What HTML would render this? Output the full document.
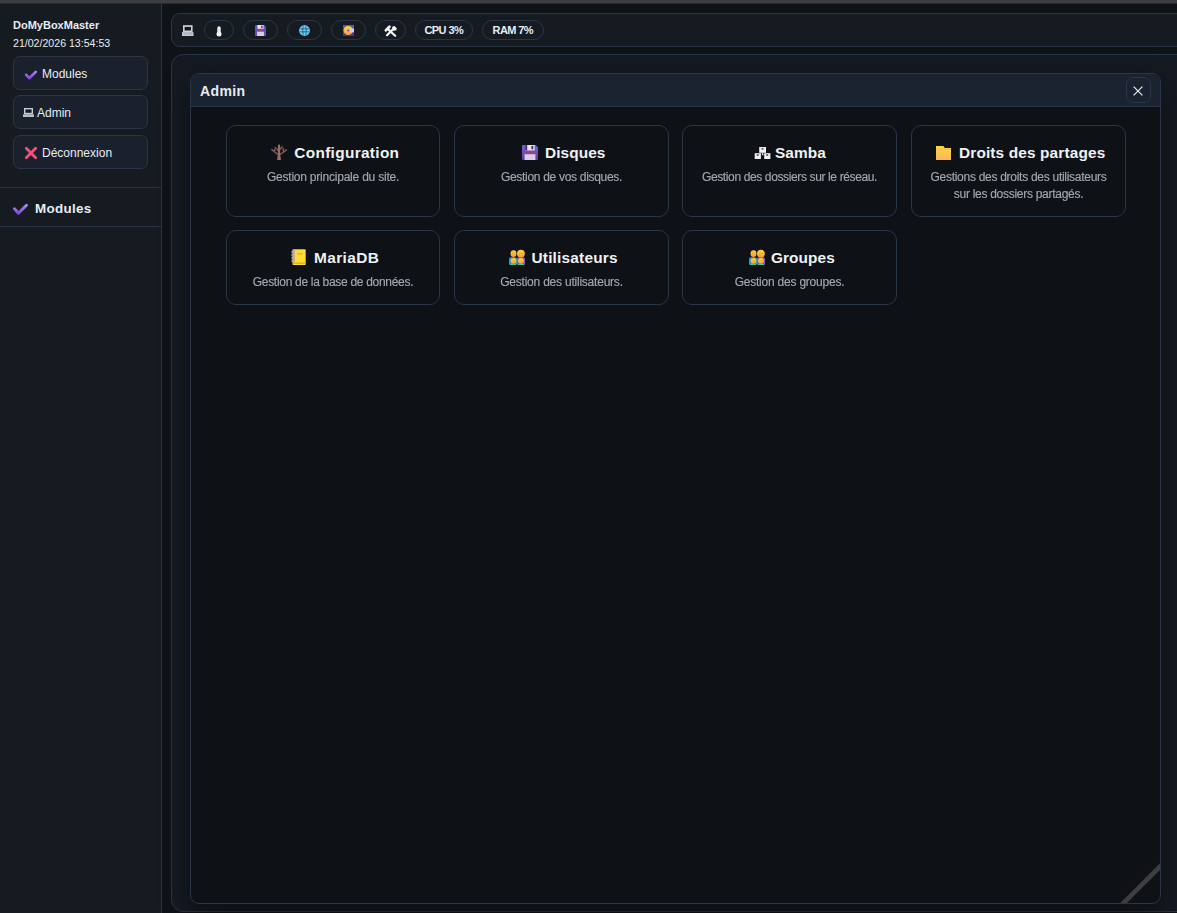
<!DOCTYPE html>
<html><head><meta charset="utf-8">
<style>
*{box-sizing:border-box;margin:0;padding:0}
html,body{width:1177px;height:913px;overflow:hidden;background:#0f1217;font-family:"Liberation Sans",sans-serif;color:#e6edf3}
.abs{position:absolute}
svg{position:absolute;overflow:visible}
#topbar{left:0;top:0;width:1177px;height:4px;background:linear-gradient(#3d3c41 0,#3d3c41 3px,#2c2c30 3px)}
#side{left:0;top:4px;width:162px;height:909px;background:#161b22;border-right:1px solid #283343}
.t{position:absolute;white-space:nowrap;line-height:1}
.sbtn{position:absolute;left:13px;width:135px;height:34px;background:#1b212c;border:1px solid #2a3546;border-radius:7px}
.hr{position:absolute;left:0;width:161px;height:1px;background:#283343}
#toolbar{left:171px;top:13px;width:1020px;height:34px;background:#161b22;border:1px solid #2a3546;border-radius:9px}
.pill{position:absolute;top:20px;height:20px;border:1px solid #2a3546;border-radius:10px}
#main{left:171px;top:54px;width:1020px;height:858px;border:1px solid #2a3546;border-radius:12px;background:#151a22}
#win{left:190px;top:73px;width:971px;height:831px;border:1px solid #2a3546;border-radius:9px;background:#0e1116;overflow:hidden;box-shadow:0 12px 30px rgba(0,0,0,.45)}
#whead{left:0;top:0;width:969px;height:33px;background:#1b2230;border-bottom:1px solid #2a3546}
.card{position:absolute;border:1px solid #2a3546;border-radius:10px;background:#0e1116}
.ti{position:absolute;white-space:nowrap;line-height:1;font-size:15.4px;font-weight:bold;letter-spacing:0.08px;color:#eef2f6}
.de{position:absolute;line-height:16.5px;font-size:12px;letter-spacing:-0.22px;color:#a2a8ae;text-align:center;-webkit-text-stroke:0.15px #a2a8ae;will-change:transform}
#close{left:1126px;top:77px;width:25px;height:26px;border:1px solid #2a3546;border-radius:7px;background:#1b2230}
</style></head>
<body>
<div id="topbar" class="abs"></div>
<div id="side" class="abs"></div>
<div class="t" style="left:13px;top:20px;font-size:11px;font-weight:bold">DoMyBoxMaster</div>
<div class="t" style="left:13px;top:38px;font-size:10.6px">21/02/2026 13:54:53</div>
<div class="sbtn" style="top:56px"></div>
<div class="sbtn" style="top:95px"></div>
<div class="sbtn" style="top:135px"></div>
<!-- check -->
<svg style="left:25px;top:71px" width="12" height="9" viewBox="0 0 12 9"><defs><linearGradient id="gc" x1="0" y1="0" x2="0" y2="1"><stop offset="0" stop-color="#a488e0"/><stop offset="1" stop-color="#8748e8"/></linearGradient></defs><path d="M1.2 3.8 L4.3 7.2 L10.8 0.9" fill="none" stroke="url(#gc)" stroke-width="2.6" stroke-linecap="round" stroke-linejoin="round"/></svg>
<div class="t" style="left:42px;top:68px;font-size:12px">Modules</div>
<!-- laptop small -->
<svg style="left:23px;top:108px" width="11" height="9" viewBox="0 0 11 9"><rect x="1" y="0" width="9" height="6.3" fill="#c9ccd4"/><rect x="2.4" y="1.4" width="6.2" height="3.4" fill="#141a26"/><rect x="0" y="6.3" width="11" height="2.7" fill="#b8bcc6"/></svg>
<div class="t" style="left:37px;top:107px;font-size:12px">Admin</div>
<!-- cross -->
<svg style="left:25px;top:147px" width="12" height="12" viewBox="0 0 12 12"><path d="M1.3 1.3 L10.7 10.7 M10.7 1.3 L1.3 10.7" stroke="#f4507c" stroke-width="2.8" stroke-linecap="round"/></svg>
<div class="t" style="left:42px;top:147px;font-size:12px">Déconnexion</div>
<div class="hr" style="top:187px"></div>
<div class="hr" style="top:226px"></div>
<svg style="left:13px;top:204px" width="15" height="11" viewBox="0 0 15 11"><path d="M1.5 4.8 L5.4 9.2 L13.5 1.3" fill="none" stroke="url(#gc)" stroke-width="3" stroke-linecap="round" stroke-linejoin="round"/></svg>
<div class="t" style="left:35px;top:201.8px;font-size:13.4px;font-weight:bold;letter-spacing:0.3px">Modules</div>

<div id="toolbar" class="abs"></div>
<!-- laptop -->
<svg style="left:182px;top:25px" width="12" height="11" viewBox="0 0 12 11"><rect x="1" y="0.2" width="9.6" height="6.8" fill="#cfd0d6"/><rect x="2.6" y="1.9" width="6.4" height="3.6" fill="#121821"/><rect x="0" y="7.1" width="11.5" height="3.9" fill="#c8cad0"/><g fill="#8aa0c8"><rect x="1.6" y="8.3" width="1.2" height="1.2"/><rect x="3.6" y="8.3" width="1.2" height="1.2"/><rect x="5.6" y="8.3" width="1.2" height="1.2"/><rect x="7.6" y="8.3" width="1.2" height="1.2"/><rect x="9" y="8.3" width="1.2" height="1.2"/></g></svg>
<div class="pill" style="left:204px;width:30px"></div>
<svg style="left:216px;top:25.5px" width="6" height="11" viewBox="0 0 6 11"><rect x="1.3" y="0.2" width="3.4" height="8" rx="1.7" fill="#f2f4f6"/><circle cx="3" cy="8" r="2.5" fill="#f2f4f6"/><rect x="2.55" y="2.2" width="0.9" height="4.6" fill="#f4d8cc"/></svg>
<div class="pill" style="left:243px;width:35px"></div>
<svg style="left:255px;top:25px" width="11" height="11" viewBox="0 0 16 16"><path d="M0 1 Q0 0 1 0 L13.5 0 L16 2.5 L16 15 Q16 16 15 16 L1 16 Q0 16 0 15 Z" fill="#5f55b0"/><rect x="3.5" y="0" width="9" height="5.5" fill="#e8e2f2"/><rect x="9" y="1" width="2" height="3.5" fill="#3a2a7a"/><rect x="3" y="8" width="10" height="1.8" fill="#e0305a"/><rect x="3" y="9.8" width="10" height="6.2" fill="#dccdeb"/></svg>
<div class="pill" style="left:287px;width:35px"></div>
<svg style="left:299px;top:24.8px" width="11" height="11" viewBox="0 0 11 11"><circle cx="5.5" cy="5.5" r="5.4" fill="#62cdfa"/><path d="M1.2 3.9 H9.8 M1.2 6.8 H9.8 M4.3 0.8 Q3.0 5.5 4.3 10.2 M6.7 0.8 Q8 5.5 6.7 10.2" stroke="#0c2238" stroke-width="0.55" fill="none"/></svg>
<div class="pill" style="left:331px;width:35px"></div>
<svg style="left:343px;top:24.8px" width="11" height="11" viewBox="0 0 11 11"><defs><linearGradient id="gcd" x1="0" y1="0" x2="0" y2="1"><stop offset="0" stop-color="#ffd94a"/><stop offset="1" stop-color="#f89a48"/></linearGradient><linearGradient id="gbg" x1="0" y1="0" x2="0" y2="1"><stop offset="0" stop-color="#6458b8"/><stop offset="1" stop-color="#4a2e90"/></linearGradient></defs><rect width="11" height="11" fill="url(#gbg)"/><circle cx="5.2" cy="5.5" r="4.6" fill="url(#gcd)"/><circle cx="5.2" cy="5.5" r="0.9" fill="#5a46a8"/><rect x="7.3" y="3.5" width="3.7" height="3.8" fill="#dcc8f4"/></svg>
<div class="pill" style="left:375px;width:31px"></div>
<svg style="left:384.5px;top:25.5px" width="12" height="11" viewBox="0 0 12 11"><g stroke="#f2f2f2" stroke-linecap="round"><path d="M3.2 3.4 L10.2 9.8" stroke-width="2.2"/><path d="M8.6 2.6 L2 9.2" stroke-width="2.2"/><path d="M0.9 4.2 L4.4 0.8" stroke-width="2.8"/></g><circle cx="9.4" cy="2.4" r="2.4" fill="#f2f2f2"/><path d="M9.6 0 L12 0 L12 2.6 Z" fill="#161b22"/></svg>
<div class="pill" style="left:415px;width:58px"></div>
<div class="pill" style="left:482px;width:62px"></div>
<div class="t" style="left:424.5px;top:25px;font-size:11px;font-weight:bold;letter-spacing:-0.6px">CPU 3%</div>
<div class="t" style="left:492.6px;top:25px;font-size:11px;font-weight:bold;letter-spacing:-0.6px">RAM 7%</div>

<div id="main" class="abs"></div>
<div id="win" class="abs">
  <div id="whead" class="abs"></div>
  <svg style="left:900px;top:760px" width="80" height="80" viewBox="0 0 80 80"><path d="M11.6 90 L90 11.6" stroke="#3e3e42" stroke-width="4.7"/></svg>
</div>
<div class="t" style="left:200px;top:84.2px;font-size:14px;font-weight:bold;letter-spacing:0.4px">Admin</div>
<div id="close" class="abs"></div>
<svg style="left:1133.3px;top:85.6px" width="10" height="10" viewBox="0 0 10 10"><path d="M0.6 0.6 L9.4 9.4 M9.4 0.6 L0.6 9.4" stroke="#e6e9ee" stroke-width="1.25"/></svg>

<div class="card" style="left:226px;top:125px;width:214px;height:92px"></div>
<div class="card" style="left:454px;top:125px;width:215px;height:92px"></div>
<div class="card" style="left:682px;top:125px;width:215px;height:92px"></div>
<div class="card" style="left:911px;top:125px;width:215px;height:92px"></div>
<div class="card" style="left:226px;top:230px;width:214px;height:75px"></div>
<div class="card" style="left:454px;top:230px;width:215px;height:75px"></div>
<div class="card" style="left:682px;top:230px;width:215px;height:75px"></div>

<!-- card titles -->
<svg style="left:271px;top:144px" width="16" height="16" viewBox="0 0 16 16"><defs><linearGradient id="gt" x1="0" x2="1"><stop offset="0" stop-color="#6a4540"/><stop offset="0.5" stop-color="#a27a70"/><stop offset="1" stop-color="#744c44"/></linearGradient></defs><g stroke="#85594f" stroke-linecap="round" fill="none"><path d="M6.8 10.5 L0.8 5.6 M3.6 8 L3.6 5.5" stroke-width="1.5"/><path d="M9.2 10.5 L15.4 5.8 M12.6 8.2 L12.2 4.6" stroke-width="1.5"/><path d="M7.2 6.5 L4.2 3.6 M8.8 5.5 L11.2 2.8" stroke-width="1.4"/></g><path d="M7 0.8 Q8 0 9 0.8 L9.3 11 L10.2 16 L5.8 16 L6.7 11 Z" fill="url(#gt)"/></svg>
<div class="ti" style="left:294.3px;top:145px;letter-spacing:0.32px">Configuration</div>
<div class="de" style="left:226px;top:169px;width:214px">Gestion principale du site.</div>

<svg style="left:522px;top:145px" width="16" height="15" viewBox="0 0 16 16" preserveAspectRatio="none"><defs><linearGradient id="gf" x1="0" y1="0" x2="0" y2="1"><stop offset="0" stop-color="#6a6ac8"/><stop offset="1" stop-color="#6a3c9a"/></linearGradient></defs><path d="M0 1 Q0 0 1 0 L13.5 0 L16 2.5 L16 15 Q16 16 15 16 L1 16 Q0 16 0 15 Z" fill="url(#gf)"/><rect x="3.2" y="0" width="9.4" height="5.8" fill="#ece4f4"/><rect x="3.2" y="0" width="2" height="5.8" fill="#3c2a78"/><rect x="9.4" y="1" width="1.8" height="3.6" fill="#3a2878"/><rect x="2.6" y="8" width="10.8" height="1.8" fill="#e0284e"/><rect x="2.6" y="9.8" width="10.8" height="6.2" fill="#dccbe8"/></svg>
<div class="ti" style="left:545px;top:145px">Disques</div>
<div class="de" style="left:454px;top:169px;width:215px;letter-spacing:-0.3px">Gestion de vos disques.</div>

<svg style="left:755px;top:147px" width="16" height="12" viewBox="0 0 16 12"><rect x="4.2" y="0" width="6.8" height="5.8" fill="#eef0f4"/><rect x="-0.3" y="6.2" width="6.2" height="5.8" fill="#eef0f4"/><rect x="9.2" y="6.2" width="6.2" height="5.8" fill="#eef0f4"/><rect x="6.5" y="1.2" width="2" height="1.3" fill="#3a2a20"/><rect x="1.7" y="7.4" width="2" height="1.3" fill="#3a2a20"/><rect x="11.2" y="7.4" width="2" height="1.3" fill="#3a2a20"/><rect x="6.8" y="5.8" width="1.6" height="2.5" fill="#c8ccd8"/></svg>
<div class="ti" style="left:775px;top:145px">Samba</div>
<div class="de" style="left:682px;top:169px;width:215px;letter-spacing:-0.37px">Gestion des dossiers sur le réseau.</div>

<svg style="left:936px;top:146px" width="15" height="14" viewBox="0 0 15 14"><defs><linearGradient id="gy" x1="0" y1="0" x2="0" y2="1"><stop offset="0" stop-color="#ffd648"/><stop offset="1" stop-color="#fbb658"/></linearGradient></defs><path d="M0 0 L7.4 0 L8.8 2 L15 2 L15 14 L0 14 Z" fill="url(#gy)"/><rect x="0" y="2.6" width="15" height="1.2" fill="#f7b840" opacity="0.6"/></svg>
<div class="ti" style="left:959px;top:145px;letter-spacing:0.14px">Droits des partages</div>
<div class="de" style="left:911px;top:169px;width:215px;letter-spacing:-0.28px">Gestions des droits des utilisateurs<br>sur les dossiers partagés.</div>

<svg style="left:291px;top:249px" width="15" height="16" viewBox="0 0 15 16"><rect x="1.5" y="0.3" width="13.2" height="15.7" rx="0.8" fill="#ffdc2e"/><rect x="6" y="4" width="5.5" height="1.4" fill="#f4a840"/><rect x="2" y="13.7" width="12.7" height="1" fill="#c89a5c"/><g fill="none" stroke="#a8a4b4" stroke-width="1.1"><path d="M3.8 1.6 Q0.3 2 1 3.6 Q1.6 4.2 3.8 3"/><path d="M3.8 4.6 Q0.3 5 1 6.6 Q1.6 7.2 3.8 6"/><path d="M3.8 7.6 Q0.3 8 1 9.6 Q1.6 10.2 3.8 9"/><path d="M3.8 10.6 Q0.3 11 1 12.6 Q1.6 13.2 3.8 12"/></g></svg>
<div class="ti" style="left:314px;top:250px;letter-spacing:0.4px">MariaDB</div>
<div class="de" style="left:226px;top:274px;width:214px;letter-spacing:-0.3px">Gestion de la base de données.</div>

<svg style="left:509px;top:249px" width="16" height="16" viewBox="0 0 16 16"><defs><linearGradient id="gface" x1="0" y1="0" x2="0" y2="1"><stop offset="0" stop-color="#ffd23a"/><stop offset="1" stop-color="#f8a030"/></linearGradient></defs><rect x="0" y="8.2" width="8" height="7.8" rx="1.5" fill="#2e8ee0"/><rect x="8" y="8.2" width="8" height="7.8" rx="1.5" fill="#7c5cc8"/><ellipse cx="4.5" cy="4.6" rx="3" ry="3.4" fill="url(#gface)"/><ellipse cx="11.9" cy="4.7" rx="3.9" ry="3.9" fill="url(#gface)"/><ellipse cx="4.5" cy="11.8" rx="2.9" ry="2.9" fill="url(#gface)"/><ellipse cx="11.9" cy="11.8" rx="2.9" ry="2.9" fill="url(#gface)"/><g fill="#a89a9a"><circle cx="3.4" cy="4.6" r="0.5"/><circle cx="5.6" cy="4.6" r="0.5"/><circle cx="10.8" cy="4.9" r="0.5"/><circle cx="13" cy="4.9" r="0.5"/></g><rect x="1" y="15.1" width="6" height="0.9" fill="#44d27a"/><rect x="9" y="15.1" width="6" height="0.9" fill="#44d27a"/></svg>
<div class="ti" style="left:531.5px;top:250px;letter-spacing:0.2px">Utilisateurs</div>
<div class="de" style="left:454px;top:274px;width:215px">Gestion des utilisateurs.</div>

<svg style="left:748.5px;top:249px" width="16" height="16" viewBox="0 0 16 16"><defs><linearGradient id="gface2" x1="0" y1="0" x2="0" y2="1"><stop offset="0" stop-color="#ffd23a"/><stop offset="1" stop-color="#f8a030"/></linearGradient></defs><rect x="0" y="8.2" width="8" height="7.8" rx="1.5" fill="#2e8ee0"/><rect x="8" y="8.2" width="8" height="7.8" rx="1.5" fill="#7c5cc8"/><ellipse cx="4.5" cy="4.6" rx="3" ry="3.4" fill="url(#gface2)"/><ellipse cx="11.9" cy="4.7" rx="3.9" ry="3.9" fill="url(#gface2)"/><ellipse cx="4.5" cy="11.8" rx="2.9" ry="2.9" fill="url(#gface2)"/><ellipse cx="11.9" cy="11.8" rx="2.9" ry="2.9" fill="url(#gface2)"/><g fill="#a89a9a"><circle cx="3.4" cy="4.6" r="0.5"/><circle cx="5.6" cy="4.6" r="0.5"/><circle cx="10.8" cy="4.9" r="0.5"/><circle cx="13" cy="4.9" r="0.5"/></g><rect x="1" y="15.1" width="6" height="0.9" fill="#44d27a"/><rect x="9" y="15.1" width="6" height="0.9" fill="#44d27a"/></svg>
<div class="ti" style="left:771px;top:250px">Groupes</div>
<div class="de" style="left:682px;top:274px;width:215px">Gestion des groupes.</div>


</body></html>
